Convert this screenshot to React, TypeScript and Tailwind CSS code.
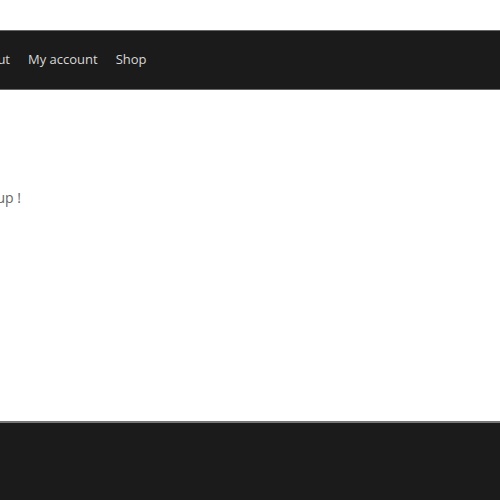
export default function App() {
  return (
    <div className="min-h-[500px] overflow-hidden bg-white font-['Open_Sans',sans-serif]">
      <div className="h-[30px]" />
      <header className="flex h-[60px] items-center border-y border-[#666] bg-[#1b1b1b] text-[13px] text-[#d8d8d8]">
        <nav className="flex items-center gap-[18px]">
          <div className="flex w-[10px] justify-end whitespace-nowrap">
            <a>About</a>
          </div>
          <a className="whitespace-nowrap">My account</a>
          <a className="whitespace-nowrap">Shop</a>
        </nav>
      </header>
      <main className="h-[331px] pt-[99px]">
        <div className="flex w-[21px] justify-end whitespace-nowrap text-[14px] leading-[18px] text-[#666]">
          <p>Thanks for signing up !</p>
        </div>
      </main>
      <footer className="h-[79px] border-t-2 border-[#777] bg-[#1b1b1b]" />
    </div>
  );
}
